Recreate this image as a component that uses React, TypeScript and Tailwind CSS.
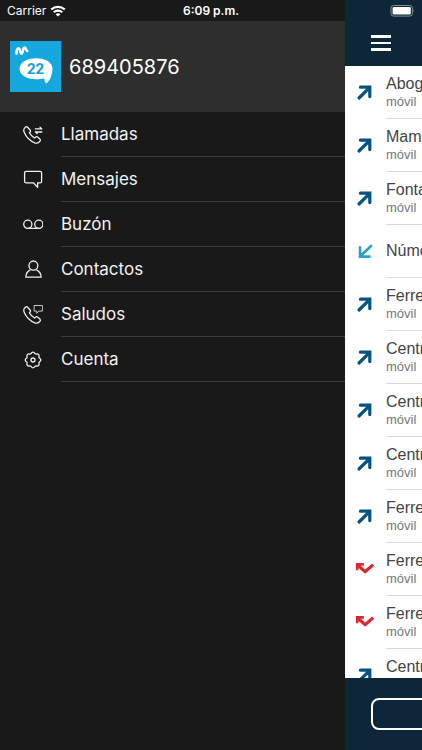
import type { ReactNode } from "react"

type CallKind = "out" | "in" | "missed"

type Call = {
  name: string
  label?: string
  kind: CallKind
}

const calls: Call[] = [
  { name: "Abog", label: "móvil", kind: "out" },
  { name: "Mam", label: "móvil", kind: "out" },
  { name: "Fonta", label: "móvil", kind: "out" },
  { name: "Núme", kind: "in" },
  { name: "Ferre", label: "móvil", kind: "out" },
  { name: "Centr", label: "móvil", kind: "out" },
  { name: "Centr", label: "móvil", kind: "out" },
  { name: "Centr", label: "móvil", kind: "out" },
  { name: "Ferre", label: "móvil", kind: "out" },
  { name: "Ferre", label: "móvil", kind: "missed" },
  { name: "Ferre", label: "móvil", kind: "missed" },
  { name: "Centr", label: "móvil", kind: "out" },
]

const HANDSET =
  "M4.6 2.2C3.9 1.5 3 1.6 2.4 2.3L1.4 3.4C.5 4.4.7 6.1 1.4 7.7C3.3 12 7.4 16 11.8 17.8C13.6 18.4 15 18.2 15.9 17.2L17 16.1C17.6 15.5 17.5 14.7 16.9 14.1L14.6 12.1C13.9 11.5 13.1 11.6 12.5 12.2L11.6 13C9.8 12 7.4 9.6 6.4 7.7L7.1 7C7.7 6.4 7.7 5.6 7.1 5Z"

function MenuIcon({ children }: { children: ReactNode }) {
  return (
    <svg
      viewBox="0 0 20 20"
      className="size-5 shrink-0"
      fill="none"
      stroke="#f0f0f0"
      strokeWidth="1.3"
      strokeLinejoin="round"
      strokeLinecap="round"
      aria-hidden="true"
    >
      {children}
    </svg>
  )
}

// Eight rounded lobes, one every 45 degrees
const COG =
  "M8.1 3.6A2 2 0 0 1 11.9 3.6A2 2 0 0 0 13.2 4.1A2 2 0 0 1 15.9 6.8A2 2 0 0 0 16.4 8.1A2 2 0 0 1 16.4 11.9A2 2 0 0 0 15.9 13.2A2 2 0 0 1 13.2 15.9A2 2 0 0 0 11.9 16.4A2 2 0 0 1 8.1 16.4A2 2 0 0 0 6.8 15.9A2 2 0 0 1 4.1 13.2A2 2 0 0 0 3.6 11.9A2 2 0 0 1 3.6 8.1A2 2 0 0 0 4.1 6.8A2 2 0 0 1 6.8 4.1A2 2 0 0 0 8.1 3.6Z"

const menu: { label: string; icon: ReactNode }[] = [
  {
    label: "Llamadas",
    icon: (
      <>
        <path d={HANDSET} />
        <path d="M12.4 3.9H18.8M17 2.3L18.8 3.9M12.4 7H18.8M14.2 8.6L12.4 7" />
      </>
    ),
  },
  {
    label: "Mensajes",
    icon: (
      <path d="M3.2 1.4H17Q18.6 1.4 18.6 3V11.2Q18.6 12.8 17 12.8H14.6V17.4L10.4 12.8H3.2Q1.6 12.8 1.6 11.2V3Q1.6 1.4 3.2 1.4Z" />
    ),
  },
  {
    label: "Buzón",
    icon: (
      <>
        <circle cx="4.8" cy="9.3" r="4.1" />
        <circle cx="15.8" cy="9.3" r="4.1" />
        <path d="M4.8 13.4H15.8" />
      </>
    ),
  },
  {
    label: "Contactos",
    icon: (
      <>
        <ellipse cx="10.4" cy="5.6" rx="4.4" ry="4.6" />
        <path d="M7 10.2Q3 12 2.8 17.2H18.2Q17.8 12 13.8 10.2" />
      </>
    ),
  },
  {
    label: "Saludos",
    icon: (
      <>
        <path d={HANDSET} />
        <path d="M11.5 .5H19.4V6.1H15.8L13.8 8.3V6.1H11.5Z" strokeWidth="0.8" />
      </>
    ),
  },
  {
    label: "Cuenta",
    icon: (
      <>
        <path d={COG} />
        <circle cx="10" cy="10" r="2" />
      </>
    ),
  },
]

function CallIcon({ kind }: { kind: CallKind }) {
  if (kind === "missed") {
    return (
      <svg viewBox="0 0 20 20" className="size-5" fill="none" stroke="#d9272e" strokeWidth="3.2" aria-hidden="true">
        <path d="M3.8 5.2L11.2 11.6L19.2 4.6" />
        <path d="M3.2 10.2V4.4H9.8" strokeWidth="2.6" />
      </svg>
    )
  }
  return (
    <svg
      viewBox="0 0 20 20"
      className="size-5"
      fill="none"
      stroke={kind === "out" ? "#045382" : "#2a9fd2"}
      strokeWidth={kind === "out" ? 3.2 : 2.6}
      strokeLinecap="round"
      aria-hidden="true"
    >
      {kind === "out" ? (
        <path d="M5 15L15.6 4.6M6.4 4.2H15.8V13.6" />
      ) : (
        <path d="M17 4L6.6 14M6 5.2V14.6H15.6" />
      )}
    </svg>
  )
}

function Logo() {
  return (
    <svg viewBox="0 0 51 51" className="size-[51px] shrink-0" role="img" aria-label="Movistar 22">
      <rect width="51" height="51" fill="#14a8df" />
      <path
        d="M6.6 12.6C6.4 9.6 7.2 7.2 8.6 7.2C10.4 7.2 9.8 12.6 11.6 12.6C13.2 12.6 12.6 6.6 14.6 6.6C16.2 6.6 15.9 9.9 17.2 9.9"
        fill="none"
        stroke="#fff"
        strokeWidth="2.5"
        strokeLinecap="round"
      />
      <path
        d="M26 17.2C35.5 17.2 42.5 21.4 42.5 27.6C42.5 32.4 40.8 37.8 37.6 41.6C36.5 42.9 35.4 42.2 35 40.8L34.2 37.2C31.8 38 29 38.2 26 38.2C16.4 38.2 9.6 33.9 9.6 27.8S16.4 17.2 26 17.2Z"
        fill="#fff"
      />
      <text
        x="25.5"
        y="33"
        textAnchor="middle"
        fill="#14a0d8"
        fontSize="15"
        fontWeight="700"
        fontFamily="Roboto, sans-serif"
      >
        22
      </text>
    </svg>
  )
}

function StatusBar() {
  return (
    <div className="absolute inset-x-0 top-0 z-10 grid h-[21px] grid-cols-3 items-center px-[7px] text-white">
      <div className="flex items-center gap-1">
        <span className="text-xs">Carrier</span>
        <svg viewBox="0 0 16 12" className="h-3 w-4" fill="none" stroke="#fff" strokeWidth="2.1" aria-hidden="true">
          <path d="M1.2 4.6C5 .9 11 .9 14.8 4.6M3.7 7.3C6.1 5 9.9 5 12.3 7.3" />
          <path d="M8 11.6L5.6 9.2C7 7.9 9 7.9 10.4 9.2Z" fill="#fff" stroke="none" />
        </svg>
      </div>
      <span className="text-center text-xs font-semibold">6:09 p.m.</span>
      <svg viewBox="0 0 26 12" className="h-3 w-[26px] justify-self-end" aria-hidden="true">
        <rect x="2" y=".5" width="21.4" height="10.6" rx="2.6" fill="none" stroke="#7f909c" />
        <rect x="3.6" y="2.1" width="18.2" height="7.4" rx="1.2" fill="#fff" />
        <path d="M24.6 3.9Q26 5.8 24.6 7.7Z" fill="#7f909c" />
      </svg>
    </div>
  )
}

function Drawer() {
  return (
    <aside className="min-w-0 flex-1 pt-[21px]">
      <div className="flex items-center gap-2 bg-[#2e2e2e] px-2.5 py-5 text-white">
        <Logo />
        <span className="text-xl">689405876</span>
      </div>
      <nav>
        {menu.map((item) => (
          <a key={item.label} href="#" className="flex h-[45px] items-center gap-[18px] pl-[23px]">
            <MenuIcon>{item.icon}</MenuIcon>
            <span className="flex h-full flex-1 items-center border-b border-[#3c3c3c] pt-0.5 text-[17px] text-[#f2f2f2]">
              {item.label}
            </span>
          </a>
        ))}
      </nav>
    </aside>
  )
}

function CallList() {
  return (
    <main className="flex w-[77px] shrink-0 flex-col overflow-hidden bg-[#0d2739] font-['Liberation_Sans',Arial,sans-serif]">
      <header className="flex h-[66px] shrink-0 items-end px-[26px] pb-[15px]">
        <button type="button" aria-label="Menú" className="flex w-5 flex-col gap-1">
          <span className="h-[3px] w-5 bg-white" />
          <span className="h-[2px] w-5 bg-white" />
          <span className="h-[3px] w-5 bg-white" />
        </button>
      </header>
      <ul className="min-h-0 flex-1 basis-0 overflow-hidden bg-white">
        {calls.map((call, i) => (
          <li key={i} className="flex h-[53px] items-center gap-3 pl-[9px] whitespace-nowrap">
            <span className="w-5 shrink-0">
              <CallIcon kind={call.kind} />
            </span>
            <div className="flex h-full flex-1 flex-col justify-center border-b border-[#d9d9d9]">
              <span className="text-base leading-5 text-[#444]">{call.name}</span>
              {call.label && <span className="text-[13px] leading-4 text-[#777]">{call.label}</span>}
            </div>
          </li>
        ))}
      </ul>
      <footer className="shrink-0 py-5 pl-[26px]">
        <button
          type="button"
          aria-label="Teclado"
          className="block h-8 w-40 rounded-lg border-2 border-white"
        />
      </footer>
    </main>
  )
}

export default function App() {
  return (
    <div className="relative flex h-screen overflow-hidden bg-[#191919] font-['Inter',sans-serif]">
      <StatusBar />
      <Drawer />
      <CallList />
    </div>
  )
}
